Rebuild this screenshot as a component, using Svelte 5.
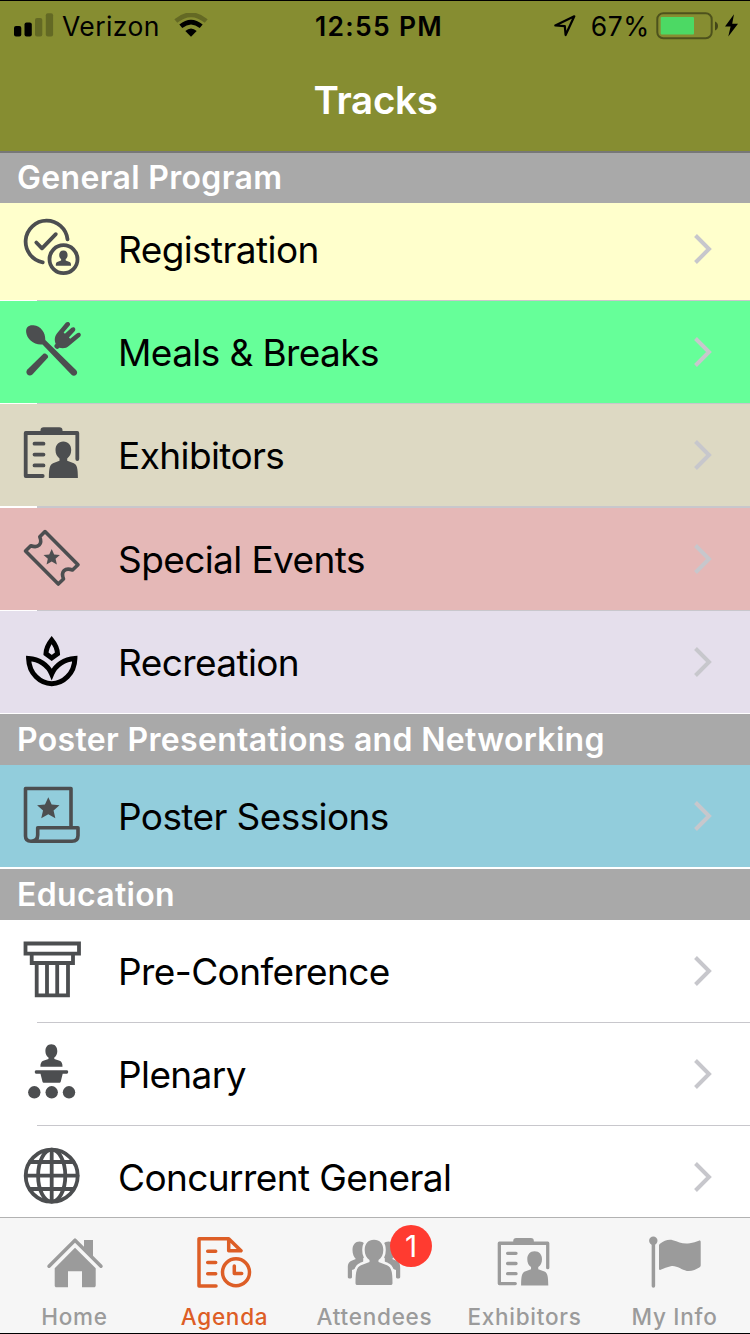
<script>
  const sections = [
    {
      title: 'General Program',
      tracks: [
        { name: 'Registration', icon: 'registration', tone: 'yellow' },
        { name: 'Meals & Breaks', icon: 'meals', tone: 'green' },
        { name: 'Exhibitors', icon: 'exhibitors', tone: 'beige' },
        { name: 'Special Events', icon: 'ticket', tone: 'pink' },
        { name: 'Recreation', icon: 'spa', tone: 'lavender' }
      ]
    },
    {
      title: 'Poster Presentations and Networking',
      tracks: [{ name: 'Poster Sessions', icon: 'poster', tone: 'blue' }]
    },
    {
      title: 'Education',
      tracks: [
        { name: 'Pre-Conference', icon: 'pillar', tone: 'plain' },
        { name: 'Plenary', icon: 'podium', tone: 'plain' },
        { name: 'Concurrent General', icon: 'globe', tone: 'plain' }
      ]
    }
  ];

  const tabs = [
    { name: 'Home', icon: 'home' },
    { name: 'Agenda', icon: 'agenda' },
    { name: 'Attendees', icon: 'attendees', badge: 1 },
    { name: 'Exhibitors', icon: 'exhibitors' },
    { name: 'My Info', icon: 'flag' }
  ];

  let active = $state('Agenda');
</script>

{#snippet star(x, y, scale)}
  <path
    class="solid"
    transform="translate({x} {y}) scale({scale})"
    d="M0 -10.3 L3 -3.7 L10 -3.1 L4.7 1.6 L6.3 8.6 L0 5 L-6.3 8.6 L-4.7 1.6 L-10 -3.1 L-3 -3.7 Z"
  />
{/snippet}

{#snippet rowIcon(name)}
  {#if name === 'registration'}
    <path d="M47.5 24.3 A21 21 0 1 0 22.7 47.3" />
    <path d="M16.3 27.5 L22 33.3 L35.8 19.2" />
    <circle cx="43.5" cy="44.2" r="14" />
    <path class="solid" d="M43.4 35.4c2.8 0 4.200 1.900 4.200 4.500 0 2-.9 3.400-1.900 4.200v1.400l3.900 1.600c1.200.6 1.400 1.700 1.400 3.700H35.800c0-2 .2-3.100 1.400-3.700l3.900-1.600v-1.400c-1-.8-1.900-2.200-1.900-4.200 0-2.600 1.400-4.500 4.200-4.500z" />
  {:else if name === 'meals'}
    <path class="solid" d="M6.200 14.500C5.500 9 9 6.800 13.500 7.300 21 8.200 25.500 14.500 25.300 22L56 52c1.500 1.400 1.500 3.400.2 4.800-1.300 1.300-3.300 1.300-4.700 0L22.500 26.500C14 27.500 7 21 6.200 14.500z" />
    <path class="solid" d="M23.500 35.800c1.800-1.600 5.800 2 4.300 4L12.400 56.500c-1.500 1.400-3.600 1.400-5 .1-1.400-1.400-1.400-3.500 0-5z" />
    <path class="solid" d="M46 4.600c2.400-2 5.200.8 3.600 3l-6 6.900 1.300 1.300 6.600-6c2.400-1.900 5 .7 3.300 3.100l-5.900 6.600 1.300 1.300 6.900-5.500c2.400-1.700 5 .9 3.100 3.100L49.400 27.500c-3.100 3-6.700 3.200-10.100 2.300-.8 1.400-2.600 1.400-4 .2-1.400-1.400-1.300-3.100.4-4.100-1.700-4.400-.9-7.800 1.800-11.100z" />
  {:else if name === 'exhibitors'}
    <path d="M57.300 38V12H5.700v43h17" />
    <rect class="solid" x="20.500" y="6.300" width="22" height="7.600" rx="3.200" />
    <path d="M14.500 22.700h9M14.500 33.600h9M14.500 44.400h9" />
    <path class="solid" d="M43.300 20.500c5 0 7.900 3.500 7.900 8.600 0 3.700-1.500 6.700-4 8.300v2.300l6.600 2.500c3.200 1.400 4.100 5 4.100 14.800H28.900c0-9.800.9-13.400 4.100-14.800l6.500-2.500v-2.300c-2.500-1.600-4-4.600-4-8.300 0-5.100 2.800-8.600 7.800-8.600z" />
  {:else if name === 'ticket'}
    <path class="thin" d="M25 6.600 L58 39.800 L52.500 45 C45 42.200 40.600 46.500 43.500 54 L38.300 59 L5.500 26 L10.800 20.700 C18.300 23.500 22.700 19.200 19.800 11.800 Z" />
    {@render star(31.7, 32.5, 0.82)}
  {:else if name === 'spa'}
    <g class="black">
      <path d="M31.700 12 C28.500 16 26.200 20.500 26 25.700 L31.700 30 L37.500 25.700 C37.200 20.500 35 16 31.700 12 Z" />
      <path d="M8.600 30.500 C19 31.300 28 37 31.700 46 C35.500 37 44.500 31.300 54.900 30.500 C54.500 46 43 55.500 31.700 55.800 C20.500 55.500 9 46 8.600 30.500 Z" />
    </g>
  {:else if name === 'poster'}
    <path class="thin" d="M51 45V6.500H5.500V54c0 3.300 2 5.200 5.500 5.200h41c4 0 6-1.700 6-5.700v-7.800H17.700V53c0 4-2.200 6.200-6.700 6.200" />
    {@render star(28.3, 26.7, 1.12)}
  {:else if name === 'pillar'}
    <path class="sharp" d="M5.500 6.500H59v10.200H5.500zM11.700 16.700H53V26H11.700zM16.700 26H48v32.300H16.700zM27 26v32M37.200 26v32" />
  {:else if name === 'podium'}
    <path class="solid" d="M31.300 4.300c3.800 0 6 2.800 6 6.900 0 2.900-1.300 5-3 6.300v1.400l5.300 1.800c2.200.900 2.900 2.800 2.900 6H20.400c0-3.200.7-5.100 2.900-6l5.200-1.800v-1.400c-1.800-1.300-3.100-3.400-3.100-6.300 0-4.100 2.200-6.900 5.900-6.900z" />
    <path class="solid" d="M16 30.300h31c1.600 0 1.600 3.400 0 3.400h-4.300l-2 8c-.3.700-.7 1-1.500 1H24c-.8 0-1.200-.3-1.500-1l-2-8H16c-1.600 0-1.600-3.400 0-3.400z" />
    <g class="solid">
      <circle cx="14.300" cy="52.300" r="6.200" />
      <circle cx="31.700" cy="52.300" r="6.200" />
      <circle cx="49" cy="52.300" r="6.200" />
    </g>
  {:else if name === 'globe'}
    <circle cx="31.700" cy="32.700" r="26" />
    <ellipse cx="31.700" cy="32.700" rx="13.600" ry="26" />
    <path d="M31.700 7v51.500M6 32.700h51.500M10 19h43.500M10 46h43.500" />
  {/if}
{/snippet}

{#snippet tabIcon(name)}
  {#if name === 'home'}
    <path d="M5 34.200 L31 8.200 L57 34.200" />
    <path class="solid" d="M40 8h9v17.500l-9-9z" />
    <path class="solid" d="M31 15.700 L51.700 36.200 V53.500c0 1.200-.7 1.800-1.800 1.800H38V39.300H24V55.300H12.500c-1.100 0-1.800-.6-1.800-1.800V36.200z" />
  {:else if name === 'agenda'}
    <path d="M22 54H5V6.700H34.700L47 18.700H34.700V6.700M13.700 19.200h8M13.700 30.400h8M13.700 41.700h8" />
    <circle cx="42" cy="40.300" r="13.500" />
    <path d="M40.300 34v7.400h7.400" />
  {:else if name === 'attendees'}
    <g class="solid">
      <path d="M15.500 9.500c4 0 7 3 7 8.500 0 3.500-1.300 6.500-3.300 8.200V34L8 38v7c0 2-4.200 2-4.200 0V36c0-5 1.500-6.500 5-7.700l3-1.300c-2-2-3.300-5-3.300-9 0-5.500 3-8.500 7-8.500z" />
      <path d="M44.500 9.500c-4 0-7 3-7 8.500 0 3.500 1.300 6.500 3.300 8.200V34L52 38v7c0 2 4.200 2 4.200 0V36c0-5-1.500-6.500-5-7.700l-3-1.300c2-2 3.300-5 3.300-9 0-5.500-3-8.500-7-8.500z" />
    </g>
    <path class="front" d="M30 7.700c5.800 0 9.300 4 9.300 10.300 0 4.500-1.800 8-4.800 10v2l8.500 3.200c4.200 1.800 5.500 6 5.500 17.800 0 1.400-.6 2-2 2h-33c-1.400 0-2-.6-2-2 0-11.800 1.300-16 5.500-17.800l8.500-3.200v-2c-3-2-4.800-5.500-4.800-10 0-6.300 3.500-10.300 9.300-10.300z" />
  {:else if name === 'exhibitors'}
    <g transform="scale(0.9375)">
      {@render rowIcon('exhibitors')}
    </g>
  {:else if name === 'flag'}
    <circle class="solid" cx="9.300" cy="8.700" r="4.200" />
    <path d="M9.400 10v44" />
    <path class="solid" d="M15 13.800c0-1.200.4-1.800 1.300-2.400 3.800-2.600 8-4.400 12.500-3.200 6 1.700 10 4.200 17 3 3.500-.6 6.200-1.400 9-2.500 1.300-.4 1.900.2 1.900 1.300v23.200c0 1.200-.4 1.700-1.400 2.200-3.500 2-7.800 4.300-12.500 3.500-5.500-1-9.800-5.700-16-4.700-3.800.7-6.800 2-10.200 3.600-1 .5-1.600 0-1.600-1z" />
  {/if}
{/snippet}

<div class="phone">
  <header class="navbar">
    <div class="status">
      <div class="status-left">
        <svg width="40" height="26" viewBox="0 0 40 26">
          <rect x="0" y="13" width="7.300" height="10.500" rx="2" />
          <rect x="10.500" y="9.500" width="7.300" height="14" rx="2" />
          <g opacity="0.250">
            <rect x="21" y="5" width="7.300" height="18.500" rx="2" />
            <rect x="31.800" y="0.300" width="7.300" height="23.200" rx="2" />
          </g>
        </svg>
        <span class="carrier">Verizon</span>
        <svg width="34" height="26" viewBox="0 0 34 26">
          <g fill="none" stroke="#000">
            <path d="M1.800 8 Q17 -4.500 32.200 8" stroke-width="4.600" opacity="0.250" />
            <path d="M6.800 13.300 Q17 4.800 27.200 13.300" stroke-width="4.600" />
          </g>
          <path d="M11.300 18 Q17 13 22.700 18 L17 23.800z" />
        </svg>
      </div>
      <div class="clock">12:55 PM</div>
      <div class="status-right">
        <svg width="24" height="26" viewBox="0 0 24 26">
          <path d="M2.300 12.500 L21.300 3.300 L12.600 22 L11.800 13.200 Z" fill="none" stroke="#000" stroke-width="2.200" stroke-linejoin="round" />
        </svg>
        <span class="percent">67%</span>
        <svg width="84" height="30" viewBox="0 0 84 30">
          <rect x="1.300" y="2.300" width="54.400" height="25" rx="6" fill="none" stroke="#000" stroke-opacity="0.420" stroke-width="2" />
          <rect x="4.700" y="6" width="33.300" height="17.500" rx="1" fill="#4cd964" />
          <path d="M59 10.500c4 1.500 4 7.500 0 9z" opacity="0.500" />
          <path d="M78 3.300 L69 15.500 H74.600 L72.300 25.500 L82 12.800 H76.200 Z" />
        </svg>
      </div>
    </div>
    <h1>Tracks</h1>
  </header>

  <main>
    {#each sections as section}
      <section>
        <h2>{section.title}</h2>
        <ul>
          {#each section.tracks as track}
            <li class={track.tone}>
              <svg class="row-icon" viewBox="0 0 64 64">
                {@render rowIcon(track.icon)}
              </svg>
              <span class="row-name">{track.name}</span>
              <svg class="chevron" viewBox="0 0 20 32">
                <path d="M2.500 2.500 L16 16 L2.500 29.500" />
              </svg>
            </li>
          {/each}
        </ul>
      </section>
    {/each}
  </main>

  <nav>
    {#each tabs as tab}
      <button class:active={active === tab.name} onclick={() => (active = tab.name)}>
        <span class="tab-icon">
          <svg viewBox="0 0 60 60">
            {@render tabIcon(tab.icon)}
          </svg>
          {#if tab.badge}
            <span class="badge">{tab.badge}</span>
          {/if}
        </span>
        <span class="tab-name">{tab.name}</span>
      </button>
    {/each}
  </nav>
</div>

<style>
  :global(body) {
    margin: 0;
    background: #000;
  }

  .phone {
    box-sizing: border-box;
    display: flex;
    flex-direction: column;
    width: 750px;
    height: 1334px;
    border-top: 1px solid #000;
    border-bottom: 1px solid #000;
    background: #fff;
    color: #000;
    font-family: Inter, 'Liberation Sans', sans-serif;
    overflow: hidden;
  }

  svg {
    display: block;
    flex: none;
  }

  .navbar {
    box-sizing: border-box;
    flex: none;
    height: 152px;
    border-bottom: 2px solid #777;
    background: #868d31;
  }

  .status {
    display: grid;
    grid-template-columns: 1fr auto 1fr;
    align-items: center;
    height: 49px;
    padding: 0 10px 0 14px;
    font-size: 26.5px;
  }

  .status-left,
  .status-right {
    display: flex;
    align-items: center;
  }

  .status-right {
    justify-content: flex-end;
  }

  .carrier {
    margin: 0 14px 0 8px;
    letter-spacing: 0.4px;
  }

  .clock {
    margin-left: 4px;
    font-weight: 600;
    letter-spacing: 1.3px;
  }

  .percent {
    margin: 0 6px 0 14px;
    letter-spacing: 0.6px;
  }

  h1 {
    margin: 0 0 0 1px;
    color: #fff;
    font-size: 38.5px;
    font-weight: 600;
    line-height: 100px;
    letter-spacing: -0.3px;
    text-align: center;
  }

  main {
    flex: 1;
    min-height: 0;
    overflow: hidden;
  }

  h2 {
    position: relative;
    z-index: 1;
    height: 51px;
    margin: 0;
    padding-left: 17px;
    background: #a9a9a9;
    color: #fff;
    font-size: 32px;
    font-weight: 600;
    line-height: 52px;
    letter-spacing: 0.33px;
  }

  ul {
    margin: 0;
    padding: 0;
    list-style: none;
  }

  /* the first section is scrolled a little way under its sticky title */
  section:first-child h2 {
    height: 50px;
    margin-bottom: -5px;
    line-height: 50px;
  }

  section:nth-child(2) ul {
    padding-bottom: 1px;
  }

  li {
    position: relative;
    box-sizing: border-box;
    display: flex;
    align-items: center;
    height: 103px;
    padding: 0 37px 1px 20px;
    border-bottom: 1px solid #fff;
    background-clip: padding-box;
  }

  li:not(:last-child)::after {
    content: '';
    position: absolute;
    right: 0;
    bottom: -1px;
    left: 37px;
    height: 1px;
    background: #c8c7cc;
  }

  .yellow { background-color: #ffffcc; }
  .green { background-color: #66ff99; }
  .beige { background-color: #ddd9c3; }
  .pink { background-color: #e5b8b7; }
  .lavender { background-color: #e5dfec; }
  .blue { background-color: #92cddc; }
  .plain { background-color: #fff; }

  li.beige {
    height: 104px;
    padding-bottom: 1px;
    border-bottom-width: 2px;
  }

  li.beige::after {
    bottom: -2px;
    height: 2px;
  }

  .row-icon {
    width: 64px;
    height: 64px;
    margin-top: -3px;
    color: #4c4e50;
  }

  .row-icon,
  .tab-icon svg {
    fill: none;
    stroke: currentColor;
    stroke-width: 3.8;
    stroke-linecap: round;
    stroke-linejoin: round;
  }

  .solid {
    fill: currentColor;
    stroke: none;
  }

  .thin {
    stroke-width: 3.6;
  }

  .sharp {
    stroke-linejoin: miter;
    stroke-linecap: butt;
  }

  .black {
    stroke: #000;
    stroke-width: 5;
    stroke-linejoin: miter;
  }

  .row-name {
    flex: 1;
    margin: 2px 0 0 34px;
    font-size: 37px;
    line-height: 50px;
    letter-spacing: -0.6px;
    white-space: nowrap;
  }

  .chevron {
    width: 20px;
    height: 32px;
    fill: none;
    stroke: #c7c7cc;
    stroke-width: 4;
  }

  nav {
    box-sizing: border-box;
    flex: none;
    display: flex;
    height: 116px;
    border-top: 1px solid #b2b2b2;
    background: #f6f6f6;
  }

  button {
    flex: 0 0 150px;
    display: flex;
    flex-direction: column;
    align-items: center;
    margin: 0;
    padding: 14px 2px 0 0;
    border: 0;
    background: none;
    color: #9b9b9b;
    font: inherit;
  }

  button.active {
    color: #dd5e26;
  }

  .tab-icon {
    position: relative;
  }

  .tab-icon svg {
    width: 60px;
    height: 60px;
    stroke-width: 3.5;
  }

  .front {
    fill: currentColor;
    stroke: #f6f6f6;
    stroke-width: 5;
    paint-order: stroke;
  }

  .badge {
    position: absolute;
    top: -7px;
    left: 46px;
    width: 42px;
    height: 42px;
    border-radius: 50%;
    background: #ff3b30;
    color: #fff;
    font-size: 30px;
    line-height: 42px;
    text-align: center;
  }

  .tab-name {
    margin: 10px 0 0 1px;
    font-size: 22.5px;
    font-weight: 500;
    line-height: 30px;
    letter-spacing: 0.75px;
    white-space: nowrap;
  }
</style>
